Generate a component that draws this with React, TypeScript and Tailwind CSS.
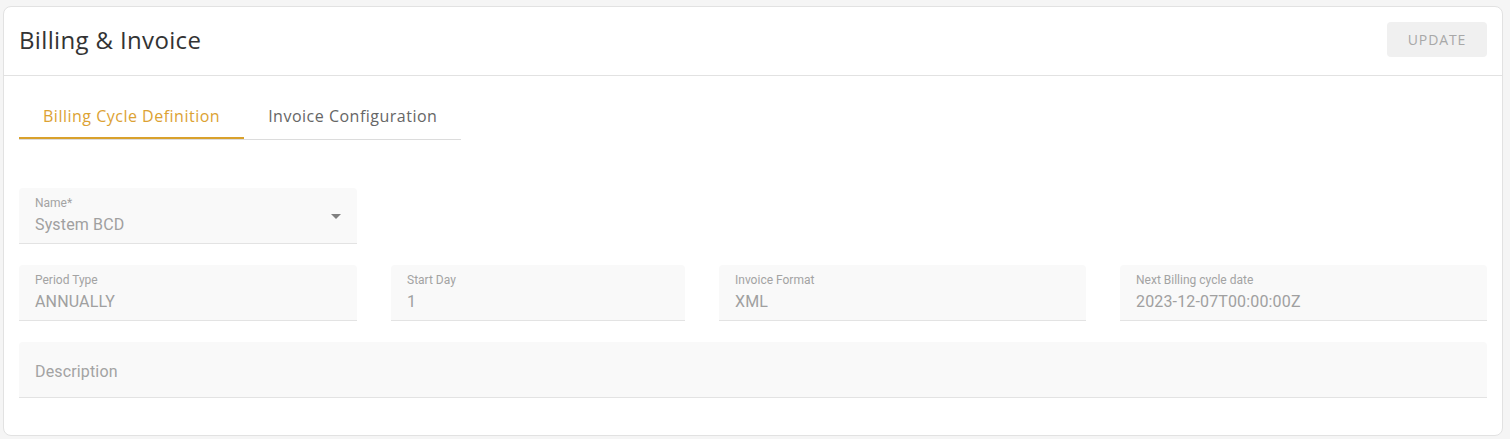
const fieldRow = [
  { label: "Period Type", value: "ANNUALLY", width: "w-[338px]" },
  { label: "Start Day", value: "1", width: "w-[294px]" },
  { label: "Invoice Format", value: "XML", width: "w-[367px]" },
  { label: "Next Billing cycle date", value: "2023-12-07T00:00:00Z", width: "w-[367px]" },
];

function Field({ label, value, width, select }: { label: string; value: string; width: string; select?: boolean }) {
  return (
    <div className={`${width} h-[56px] relative bg-[#f9f9f9] rounded-t-[4px] border-b border-[#e3e3e3] px-4 pt-[8px]`}>
      <div className="text-[12px] leading-[14px] text-[#a3a3a3]">{label}</div>
      <div className="text-[16px] leading-[24px] tracking-[0.15px] text-[#a0a0a0] mt-[3px]">{value}</div>
      {select && (
        <div className="absolute right-[16px] top-[26px] w-0 h-0 border-l-[5px] border-r-[5px] border-t-[5px] border-l-transparent border-r-transparent border-t-[#808080]" />
      )}
    </div>
  );
}

export default function App() {
  return (
    <div className="min-h-[439px] bg-[#f5f5f5] pt-[6px] px-[3px] pb-[3px] font-['Roboto',sans-serif]">
      <div className="w-[1500px] bg-white border border-[#e2e2e2] rounded-[8px]">
        {/* header */}
        <div className="h-[69px] flex items-center justify-between pl-[15px] pr-[15px] border-b border-[#e2e2e2]">
          <h1 className="font-['Open_Sans',sans-serif] text-[24px] tracking-[0.35px] text-[#333333] mt-[-2px]">Billing &amp; Invoice</h1>
          <button className="w-[100px] h-[35px] bg-[#f0f0f0] rounded-[4px] text-[14px] tracking-[0.9px] text-[#a8a8a8] font-['Open_Sans',sans-serif] mt-[-3px]">
            UPDATE
          </button>
        </div>

        <div className="px-[15px] pt-[15px] pb-[37px]">
          {/* tabs */}
          <div className="flex w-[442px] border-b border-[#dcdcdc] font-['Open_Sans',sans-serif] text-[16px] tracking-[0.5px] whitespace-nowrap">
            <div className="shrink-0 h-[48px] px-6 pt-[4px] flex items-center text-[#dca233] border-b-2 border-[#d9a12c] -mb-[1px]">
              Billing Cycle Definition
            </div>
            <div className="shrink-0 h-[48px] px-6 pt-[2px] flex items-center text-[#666666]">Invoice Configuration</div>
          </div>

          <div className="mt-[48px] flex flex-col gap-[21px]">
            <Field label="Name*" value="System BCD" width="w-[338px]" select />
            <div className="flex gap-[34px]">
              {fieldRow.map((f) => (
                <Field key={f.label} label={f.label} value={f.value} width={f.width} />
              ))}
            </div>
            <div className="w-[1468px] h-[56px] bg-[#f9f9f9] rounded-t-[4px] border-b border-[#e3e3e3] px-4 pt-[4px] flex items-center">
              <span className="text-[16px] tracking-[0.15px] text-[#a3a3a3]">Description</span>
            </div>
          </div>
        </div>
      </div>
    </div>
  );
}
